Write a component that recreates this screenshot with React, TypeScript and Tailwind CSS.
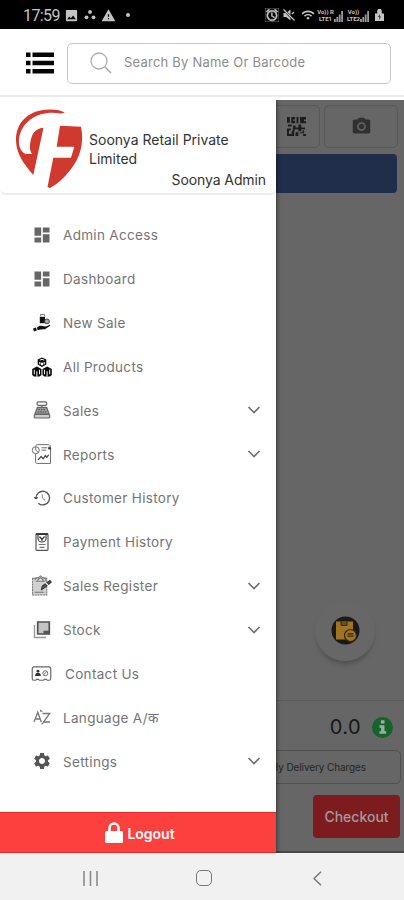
import type { ReactNode } from "react";
import {
  MdAlarm,
  MdDashboard,
  MdImage,
  MdPhotoCamera,
  MdSettings,
  MdWarning,
  MdWifi,
} from "react-icons/md";

type MenuItem = {
  label: string;
  icon: ReactNode;
  expandable?: boolean;
  labelClass?: string;
};

function NewSaleIcon() {
  return (
    <svg viewBox="0 0 20 20" className="size-5" fill="#111">
      <path d="M8.6 3.2V1.4h4v1.8" fill="none" stroke="#777" strokeWidth="1" />
      <path d="M7.8 3.8h5.2v6.4H7.8z" />
      <circle cx="15" cy="8.4" r="2.4" fill="#aaa" stroke="#444" />
      <path d="M1 15.4l3-1 .8 3L2 18.6zM5 14.6c2-2.4 4.4-2.2 6.6-1.4l2.4.3 3.8-1.8c.8.3.5 1 0 1.4L13 16.2l-4.2.4-3.3.6z" />
    </svg>
  );
}

function ProductsIcon() {
  return (
    <svg viewBox="0 0 20 20" className="size-5" fill="#080808">
      <path d="M10 .5l4.3 2v5L10 10 5.700 7.500v-5z" />
      <path d="M4.900 9.500L9.500 12v6l-2 1.500H2L.2 18v-6zM15.100 9.500L19.800 12v6L18 19.500h-5.500l-2-1.500v-6z" />
      <path
        d="M7.800 3.200L10 2.300l2.200.9M7.700 5v2.300M12.300 5v2.300M2.300 12.700v4.600M4.900 14.200V19.500M7.500 12.700v4.600M12.500 12.700v4.600M15.100 14.200V19.500M17.700 12.700v4.600"
        fill="none"
        stroke="#f4f4f4"
        strokeWidth="1"
      />
      <path d="M8.700 5.200L10 6l1.300-.8v2.500L10 8.500l-1.300-.8z" fill="#fff" />
    </svg>
  );
}

function RegisterMachineIcon() {
  return (
    <svg viewBox="0 0 20 20" className="size-5" fill="none" stroke="#666" strokeWidth="1.2" strokeLinejoin="round">
      <rect x="5" y="1.8" width="9.8" height="3.6" rx="1.6" />
      <path d="M10 5.4v2" />
      <path d="M5.4 7.300h9.200l2.600 7H2.800z" fill="#999" />
      <path d="M6.3 9.500h7.400M5.700 11.800h8.600" stroke="#555" strokeDasharray="1.5 1" />
      <rect x="2.3" y="14.3" width="15.4" height="3.7" rx="1" fill="#ccc" />
    </svg>
  );
}

function ReportsIcon() {
  return (
    <svg viewBox="0 0 22 22" className="size-[22px]" fill="none" stroke="#666" strokeWidth="1">
      <path d="M5 2.500C5 1.500 6 1.200 7 1.200h11c2 0 2.500 1.500 2.500 4h-2.500" />
      <path d="M4.800 11v8.200c0 1.200.5 1.700 1.700 1.700h14V6" />
      <circle cx="5" cy="7" r="3.7" fill="#fff" />
      <path d="M5 3.500V7l2.500 2.300M11 4.500h6M11 7h5" />
      <path d="M19 3.500v2h2" stroke="#333" strokeWidth="1.6" />
      <path d="M7.500 17l3.200-3.500 2 2.500 2.300-3.300 1.500 2 2-3" stroke="#444" strokeWidth="1.3" />
    </svg>
  );
}

function HistoryIcon() {
  return (
    <svg viewBox="0 0 20 20" className="size-5" fill="none" stroke="#555" strokeWidth="1.3">
      <path d="M4 10.500a6.800 6.800 0 1 1 2.300 4.700" />
      <path d="M1.400 9.300L4 11.600l2.600-2.300z" fill="#444" stroke="none" />
      <path d="M10.300 6.300V10l2.700 2.200" stroke="#888" strokeWidth="1" />
    </svg>
  );
}

function PaymentIcon() {
  return (
    <svg viewBox="0 0 20 20" className="size-5" fill="none" stroke="#555" strokeWidth="1.2">
      <rect x="4" y="1.6" width="12" height="16.8" rx="1" />
      <path d="M4 2.200h12" stroke="#333" strokeWidth="1.6" />
      <path d="M6 3v3.500c0 2 2 3.500 4 3.500s4-1.500 4-3.500V3" stroke="#444" />
      <path d="M7.500 4.500L10 7.500l2.500-3M10 6v3" stroke="#333" />
      <path d="M6.500 12.500h7M7.500 15.300h5" stroke="#777" />
    </svg>
  );
}

function SalesRegisterIcon() {
  return (
    <svg viewBox="0 0 20 20" className="size-[21px]" fill="none" stroke="#777" strokeWidth="1">
      <path d="M1.500 3H15v16H1.500z" fill="#d2d2d2" strokeDasharray="2 .6" />
      <path d="M4 5V3l3-.5L9 .8l2 1.700 3 .5v2.500M3.500 16.500h9" />
      <path d="M5.500 6L9 2.500 12.500 6z" fill="#eee" />
      <path d="M10 14l.7-3.500L18 5.200l1.300 1.700L13 12z" fill="#555" stroke="#333" />
      <path d="M13.500 7l3.800 3.800" stroke="#fff" />
    </svg>
  );
}

function StockIcon() {
  return (
    <svg viewBox="0 0 20 20" className="size-5" fill="none">
      <path d="M2.500 5v12.500H14" stroke="#999" strokeWidth="1.4" />
      <path d="M5.700 2h11.600v12H5.700z" fill="#c4c4c4" stroke="#505050" strokeWidth="1.7" />
      <path d="M11.500 10.700h5.500V14h-5.500z" fill="#555" />
    </svg>
  );
}

function ContactIcon() {
  return (
    <svg viewBox="0 0 22 18" className="h-[18px] w-[22px]" fill="none" stroke="#666" strokeWidth="1">
      <path
        d="M3.500 1.500h15c1.500 0 2.200 1 2.200 2.200v10c0 1.200-.6 1.900-1.600 1.900h-2l-1-1h-2l-1 1H8.800l-1-1h-2l-1 1h-2c-1 0-1.500-.7-1.500-1.900v-10c0-1.200.7-2.200 2.200-2.200z"
        strokeWidth="1.2"
      />
      <circle cx="7.3" cy="6" r="1.500" fill="#333" stroke="none" />
      <path d="M4.300 11c0-2.300 1.200-3.200 3-3.200s3 .9 3 3.200z" fill="#333" stroke="none" />
      <circle cx="15" cy="8.2" r="2.6" />
      <path d="M13.500 9.500l3-3" />
    </svg>
  );
}

function LanguageIcon() {
  return (
    <svg viewBox="0 0 20 20" className="size-5" fill="none" stroke="#777" strokeWidth="1.3">
      <path d="M2 15L5.800 5.200 9.300 15M3.300 12h4.800M10.500 6.500h7.200L11.500 15H18" />
      <path d="M8 2.500l3 1.700-2.700.8zM9.500 15.800l2.500.5-2.500 1.500z" fill="#777" stroke="none" />
    </svg>
  );
}

const menuItems: MenuItem[] = [
  { label: "Admin Access", icon: <MdDashboard className="size-5 text-[#666]" /> },
  { label: "Dashboard", icon: <MdDashboard className="size-5 text-[#666]" /> },
  { label: "New Sale", icon: <NewSaleIcon /> },
  { label: "All Products", icon: <ProductsIcon /> },
  { label: "Sales", icon: <RegisterMachineIcon />, expandable: true },
  { label: "Reports", icon: <ReportsIcon />, expandable: true },
  { label: "Customer History", icon: <HistoryIcon /> },
  { label: "Payment History", icon: <PaymentIcon /> },
  { label: "Sales Register", icon: <SalesRegisterIcon />, expandable: true },
  { label: "Stock", icon: <StockIcon />, expandable: true },
  { label: "Contact Us", icon: <ContactIcon />, labelClass: "pl-0.5" },
  { label: "Language A/क", icon: <LanguageIcon /> },
  { label: "Settings", icon: <MdSettings className="size-5 text-[#555]" />, expandable: true },
];

function Chevron() {
  return (
    <svg viewBox="0 0 14 10" className="h-[10px] w-[14px]" fill="none" stroke="#707070" strokeWidth="1.7">
      <path d="M1.500 2L7 7.500 12.500 2" />
    </svg>
  );
}

function NetworkLabel({ top, bottom }: { top: string; bottom: string }) {
  return (
    <span className="flex flex-col items-center text-[6px] font-bold leading-[7px]">
      <span>{top}</span>
      <span>{bottom}</span>
    </span>
  );
}

function SignalBars() {
  return (
    <svg viewBox="0 0 9 11" className="h-[11px] w-[9px]" fill="#999">
      <path d="M0 8h1.800v3H0zM2.400 6h1.800v5H2.400zM4.800 3.500h1.800V11H4.800zM7.200 0H9v11H7.200z" />
    </svg>
  );
}

function StatusBar() {
  return (
    <div className="flex h-[29px] items-center bg-black pl-[23px] pr-[20px] pt-px text-[#c4c4c4]">
      <span className="w-[36px] pt-0.5 font-[Roboto] text-[16px] leading-none tracking-[-0.6px]">17:59</span>
      <MdImage className="ml-[5px] size-[15px]" />
      <svg viewBox="0 0 12 10" className="ml-[5px] h-[10px] w-3" fill="currentColor">
        <circle cx="6" cy="2" r="1.9" />
        <circle cx="2.5" cy="7.300" r="1.9" />
        <circle cx="9.500" cy="7.300" r="1.9" />
      </svg>
      <MdWarning className="ml-[5px] size-[15px]" />
      <span className="ml-[10px] size-[4px] rounded-full bg-current" />
      <div className="ml-auto flex items-center">
        <MdAlarm className="size-[14px] stroke-current stroke-1" />
        <svg viewBox="0 0 12 12" className="ml-[4px] size-3" fill="currentColor">
          <path d="M.5 4h2.700L7.500.5v11L3.200 8H.5z" />
          <path d="M1 1l10 10" stroke="black" strokeWidth="2.400" />
          <path d="M.5.500L11.500 11.500M9 5l2-2" stroke="currentColor" strokeWidth="1.2" />
        </svg>
        <MdWifi className="ml-[6px] size-[14px]" />
        <div className="ml-[2px] flex items-end font-[Roboto]">
          <NetworkLabel top="Vo)) R" bottom="LTE1" />
          <SignalBars />
        </div>
        <div className="ml-[4px] flex items-end font-[Roboto]">
          <NetworkLabel top="Vo))" bottom="LTE2" />
          <SignalBars />
        </div>
        <svg viewBox="0 0 9 12" className="ml-[6px] h-[12px] w-[9px]" fill="currentColor">
          <path d="M0 4.500h2.200V2.200A2 2 0 0 1 6.800 2v2.500H9V12H0z" />
          <path d="M5 5L3 8h1.500L4 11l2-3.500H4.700z" fill="#222" />
        </svg>
      </div>
    </div>
  );
}

function SearchHeader() {
  return (
    <header className="mb-[3px] flex h-[68px] items-center border-b-2 border-[#ececec] bg-white pl-[26px] pr-[13px]">
      <svg viewBox="0 0 28 22" className="mt-px h-[22px] w-7 shrink-0" fill="#050505">
        <path d="M0 .5h4.500V5H0zM6.500.5H28V5H6.500zM0 8.800h4.500v4.500H0zM6.500 8.800H28v4.500H6.500zM0 17h4.500v4.500H0zM6.500 17H28v4.500H6.500z" />
      </svg>
      <div className="ml-[13px] mt-[2px] flex h-[41px] flex-1 items-center rounded-[5px] border-[1.5px] border-[#c6c6c6] pl-[22px]">
        <svg viewBox="0 0 22 22" className="size-[22px]" fill="none" stroke="#aaa" strokeWidth="1.3">
          <circle cx="9" cy="9" r="8" />
          <path d="M15 15l6 6" strokeWidth="1.6" />
        </svg>
        <span className="ml-[12px] whitespace-nowrap text-[13px] tracking-[0.22px] text-[#8c8c8c]">
          Search By Name Or Barcode
        </span>
      </div>
    </header>
  );
}

function CompanyLogo() {
  return (
    <svg viewBox="0 0 68 80" className="h-20 w-[68px] shrink-0" fill="#d0392d">
      <path d="M1 31C1 12 15 .5 35 .5c7 0 12 1 15 3.500l-5 .5C28 1 7 9 4 30c-1 8 3 15 8 15h5c-3-4-2.500-11 0-18 2-5 6-8 11.500-8.300L18.300 66C9 55 1 45 1 31z" />
      <path d="M45 16.700l21 1c3 14 0 28-8 39.500C51 67.500 43 74.500 35 79l-2.500-1 5.800-29.300H56l3.300-11H41.700z" />
    </svg>
  );
}

function QrIcon() {
  return (
    <svg viewBox="0 0 20 20" className="size-[19px]" fill="#1c1c1c">
      <path d="M0 0h3v6H0zM4.500 0h4v2.500h-2V4h2v2.500h-4zM10 0h2v6.500h-2zM13.500 0H20v2.500h-2v2h2v2h-6zM1 8h4v2H1zM6.500 9H9v2h3V8h3v3h4v2h-4v2h-3v-2H8v2H6v-3h.5zM0 12h4v2H2v4h3v-3h2.500v5H0zM9 16h3v4H9zM13.500 16h3v-2H18v3h-4.500zM17 18h3v2h-3z" />
    </svg>
  );
}

function DimmedSale() {
  return (
    <main className="flex h-full flex-col items-end border-b-2 border-[#484848] bg-[#666] pt-[5px]">
      <div className="flex gap-1 pr-[6px]">
        <div className="flex h-[43px] w-[74px] items-center justify-center rounded-[5px] border border-[#585858] pl-[26px]">
          <QrIcon />
        </div>
        <div className="flex h-[43px] w-[74px] items-center justify-center rounded-[5px] border border-[#585858]">
          <MdPhotoCamera className="size-[21px] text-[#303030]" />
        </div>
      </div>
      <div className="mr-[7px] mt-[6px] h-[39px] w-[260px] rounded-[4px] bg-[#202e4b]" />
      <div className="mr-[29px] mt-auto flex size-[60px] items-start justify-center rounded-full bg-[#676767] pt-[15px] shadow-[0_5px_5px_-2px_rgba(0,0,0,0.25)]">
        <svg viewBox="0 0 29 29" className="size-[29px]">
          <circle cx="14.500" cy="14.500" r="14" fill="#181a1c" />
          <path d="M5 5.500h17v14l-5 4H5z" fill="#a07420" />
          <path d="M10 5.500v4h6v-4" fill="#6b4d16" stroke="#332711" />
          <circle cx="19.500" cy="19.500" r="6" fill="#a07420" stroke="#302714" strokeWidth="1.2" />
          <path d="M16.500 17.800h6M16.500 20.200h6" stroke="#302714" strokeWidth="1.2" />
        </svg>
      </div>
      <div className="mt-[39px] flex w-full items-center justify-end border-t border-[#5a5a5a] pr-[11px] pt-[14px]">
        <span className="text-[20px] leading-6 tracking-[0.4px] text-[#161616]">0.0</span>
        <svg viewBox="0 0 22 22" className="ml-[11px] size-[21px]">
          <circle cx="11" cy="11" r="11" fill="#16632d" />
          <path d="M9.300 3.500h3.800v3.400H9.300zM7.800 8.600h5.300v6.300h1.700v2.600h-7v-2.600h1.700v-3.700H7.800z" fill="#a0aaa2" />
        </svg>
      </div>
      <div className="mr-[3px] mt-[11px] flex h-[34px] w-[220px] items-center justify-end rounded-[5px] border border-[#505050] pr-[34px] text-[10px] tracking-[-0.1px] text-[#252525]">
        Apply Delivery Charges
      </div>
      <div className="mb-[13px] mr-1 mt-[11px] flex h-[43px] w-[87px] shrink-0 items-center justify-center rounded-[4px] bg-[#7c1c1f] text-[14px] font-medium text-[#a69a9a]">
        Checkout
      </div>
    </main>
  );
}

function Drawer() {
  return (
    <aside className="absolute inset-y-0 left-0 flex w-[276px] flex-col bg-white shadow-[1px_0_4px_rgba(0,0,0,0.45)]">
      <div className="flex h-[95px] shrink-0 rounded-b-[6px] border-b-2 border-[#ededed] pl-[15px] pt-[9px]">
        <CompanyLogo />
        <div className="ml-[6px] flex-1 pr-[10px] pt-[21px] text-[14px] leading-[19px] text-[#333]">
          <p className="w-[160px] whitespace-nowrap">
            Soonya Retail Private
            <br />
            Limited
          </p>
          <p className="mt-[2px] text-right tracking-[-0.1px]">Soonya Admin</p>
        </div>
      </div>
      <nav className="mt-[18px] flex flex-col">
        {menuItems.map((item) => (
          <div key={item.label} className="flex h-[43.87px] items-center pl-[31px] pr-[15px]">
            <span className="flex w-[21px] shrink-0 items-center justify-center">{item.icon}</span>
            <span
              className={`ml-[11px] flex-1 whitespace-nowrap pt-px text-[13.5px] tracking-[0.32px] text-[#747474] ${item.labelClass ?? ""}`}
            >
              {item.label}
            </span>
            {item.expandable && <Chevron />}
          </div>
        ))}
      </nav>
      <div className="mt-auto flex h-[41px] items-center justify-center border-y border-[#e8282a] bg-[#fb403e] pl-[4px] text-white">
        <svg viewBox="0 0 18 21" className="h-[21px] w-[18px]" fill="none">
          <path d="M4.500 10V6a4.500 4.500 0 0 1 9 0v4" stroke="white" strokeWidth="2.600" />
          <rect y="9" width="18" height="12" rx="1.500" fill="white" />
        </svg>
        <span className="ml-1 pt-px text-[14px] font-semibold">Logout</span>
      </div>
    </aside>
  );
}

function NavigationBar() {
  return (
    <footer className="flex h-[47px] items-center bg-[#f1f1f1] pl-[83px] pt-[3px]">
      <svg viewBox="0 0 15 15" className="h-[15px] w-[15px]" fill="none" stroke="#8b8b8b" strokeWidth="1.6">
        <path d="M1 0v15M7.500 0v15M14 0v15" />
      </svg>
      <span className="ml-[98px] size-[16px] rounded-[5px] border-[1.5px] border-[#777]" />
      <svg viewBox="0 0 9 15" className="ml-[101px] h-[15px] w-[9px]" fill="none" stroke="#777" strokeWidth="1.5">
        <path d="M8 .8L1 7.500l7 6.700" />
      </svg>
    </footer>
  );
}

export default function App() {
  return (
    <div className="flex h-[900px] w-[404px] flex-col overflow-hidden bg-white font-[Inter,'Noto_Sans',sans-serif]">
      <StatusBar />
      <SearchHeader />
      <div className="relative h-[753px] overflow-hidden">
        <DimmedSale />
        <Drawer />
      </div>
      <NavigationBar />
    </div>
  );
}
